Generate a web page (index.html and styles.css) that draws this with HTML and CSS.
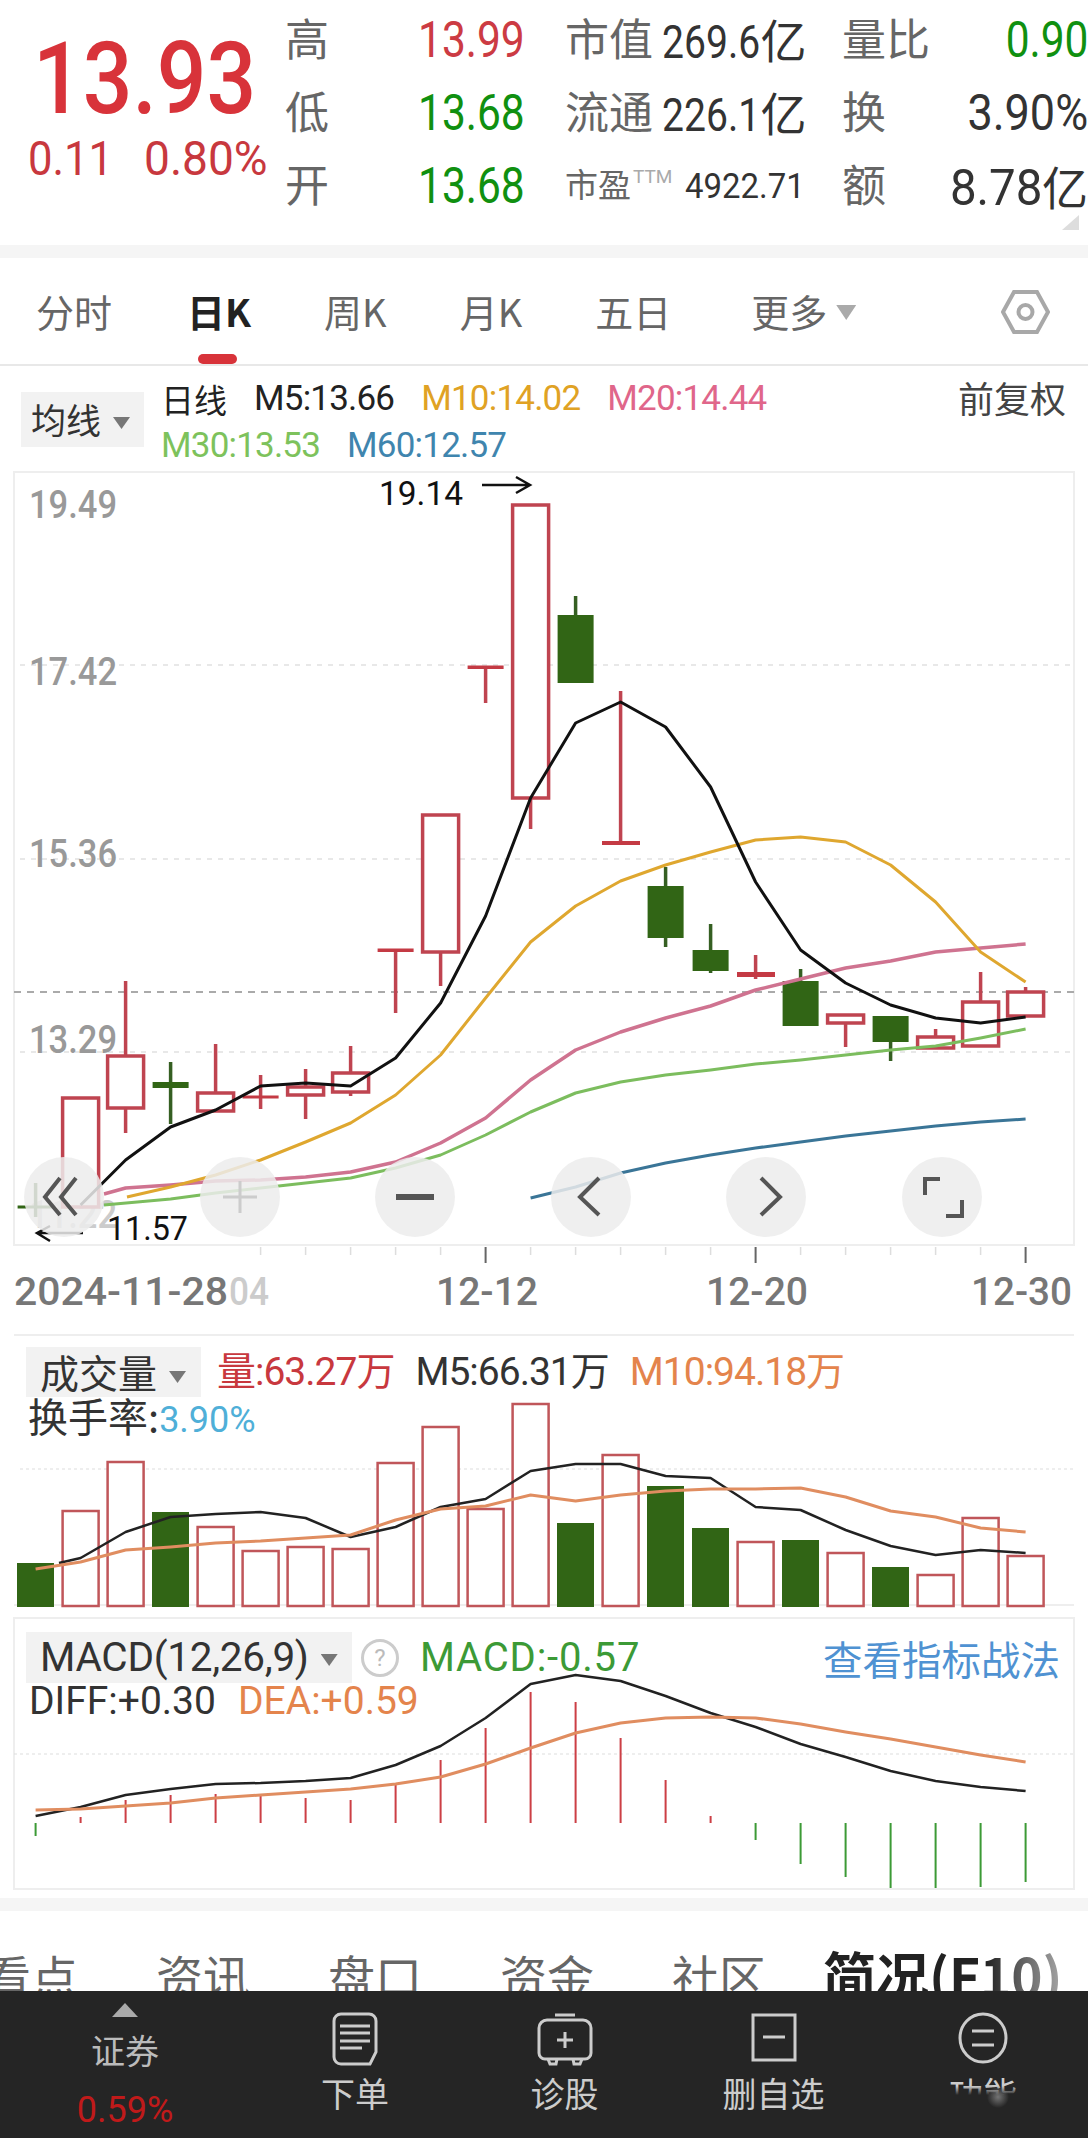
FILE: index.html
```html
<!DOCTYPE html>
<html lang="zh-CN">
<head>
<meta charset="utf-8">
<title>K线</title>
<link rel="stylesheet" href="styles.css">
</head>
<body>
<div class="screen">
  <header class="quote">
    <div class="price-block">
      <div class="price"><span class="n">13.93</span></div>
      <div class="change"><span class="n">0.11</span><span class="n wide">0.80%</span></div>
    </div>
    <div class="stats">
      <span class="lab">高</span><span class="val red"><span class="n">13.99</span></span><span class="lab">市值</span><span class="val dark mid"><span class="n">269.6</span><i>亿</i></span><span class="lab">量比</span><span class="val end green"><span class="n">0.90</span></span>
      <span class="lab">低</span><span class="val green"><span class="n">13.68</span></span><span class="lab">流通</span><span class="val dark mid"><span class="n">226.1</span><i>亿</i></span><span class="lab">换</span><span class="val end dark"><span class="n pct">3.90%</span></span>
      <span class="lab">开</span><span class="val green"><span class="n">13.68</span></span><span class="lab pe">市盈<sup>TTM</sup></span><span class="val dark small"><span class="n">4922.71</span></span><span class="lab">额</span><span class="val end dark"><span class="n amt">8.78</span><i>亿</i></span>
    </div>
    <span class="corner"></span>
  </header>
  <div class="band"></div>
  <nav class="tabs">
    <span>分时</span>
    <span class="active">日K</span>
    <span>周K</span>
    <span>月K</span>
    <span>五日</span>
    <span class="more">更多<b class="caret"></b></span>
    <svg class="hex" width="49" height="46" viewBox="0 0 49 46"><polygon points="2,23 13,3 36,3 47,23 36,43 13,43"/><circle cx="24.500" cy="23" r="7"/></svg>
  </nav>
  <section class="legend">
    <div class="select ma-select">均线<b class="caret small-caret"></b></div>
    <div class="legend-lines">
      <div class="line-1"><span class="cjk">日线</span><span>M5:13.66</span><span class="c-yellow">M10:14.02</span><span class="c-pink">M20:14.44</span></div>
      <div class="line-2"><span class="c-lgreen">M30:13.53</span><span class="c-blue">M60:12.57</span></div>
    </div>
    <span class="adjust">前复权</span>
  </section>
  <section class="kline">
    <svg class="plot" width="1088" height="860" viewBox="0 470 1088 860">
      <rect class="frame" x="14" y="472" width="1060" height="773"/>
      <g class="grid">
        <line x1="20" y1="665" x2="1074" y2="665"/>
        <line x1="20" y1="859" x2="1074" y2="859"/>
        <line x1="20" y1="1052" x2="1074" y2="1052"/>
      </g>
      <line class="last" x1="14" y1="992" x2="1074" y2="992"/>
      <g class="axis">
        <text x="29" y="518" textLength="88" lengthAdjust="spacingAndGlyphs">19.49</text>
        <text x="29" y="685" textLength="88" lengthAdjust="spacingAndGlyphs">17.42</text>
        <text x="29" y="867" textLength="88" lengthAdjust="spacingAndGlyphs">15.36</text>
        <text x="29" y="1053" textLength="88" lengthAdjust="spacingAndGlyphs">13.29</text>
        <text class="faded" x="29" y="1228" textLength="88" lengthAdjust="spacingAndGlyphs">11.22</text>
      </g>
      <g class="wick-up">
        <path d="M125.600 981V1056M125.600 1108V1133M215.600 1044V1093M260.600 1075V1109M305.600 1069V1119M350.600 1046V1073M350.600 1092V1096M395.600 950V1013M440.600 952V986M485.600 667V703M530.600 798V829M620.600 691V843M755.600 955V979M845.600 1023V1047M935.600 1029V1037M980.600 972V1002M1025.600 987V992"/>
      </g>
      <g class="wick-down">
        <path d="M35.600 1183V1217M170.600 1062V1124M575.600 596V615M665.600 867V947M710.600 924V973M800.600 969V981M890.600 1042V1061"/>
      </g>
      <g class="up">
        <rect x="62.600" y="1098" width="36" height="109"/>
        <rect x="107.600" y="1056" width="36" height="52"/>
        <rect x="197.600" y="1093" width="36" height="18"/>
        <rect x="287.600" y="1087" width="36" height="8"/>
        <rect x="332.600" y="1073" width="36" height="19"/>
        <rect x="422.600" y="815" width="36" height="137"/>
        <rect x="512.600" y="505" width="36" height="293"/>
        <rect x="827.600" y="1015" width="36" height="8"/>
        <rect x="917.600" y="1037" width="36" height="11"/>
        <rect x="962.600" y="1002" width="36" height="44"/>
        <rect x="1007.600" y="992" width="36" height="24"/>
      </g>
      <g class="bars-red">
        <rect x="242.600" y="1095.500" width="36" height="3"/>
        <rect x="377.600" y="948.500" width="36" height="3.500"/>
        <rect x="467.600" y="665.500" width="36" height="3.500"/>
        <rect x="602" y="841" width="38" height="4"/>
        <rect x="737" y="972" width="38" height="5"/>
      </g>
      <g class="down">
        <rect x="17.600" y="1205.500" width="36" height="3"/>
        <rect x="152.600" y="1082" width="36" height="6"/>
        <rect x="557.600" y="615" width="36" height="68"/>
        <rect x="647.600" y="886" width="36" height="52"/>
        <rect x="692.600" y="950" width="36" height="21"/>
        <rect x="782.600" y="981" width="36" height="45"/>
        <rect x="872.600" y="1016" width="36" height="26"/>
      </g>
      <polyline class="ma m60" points="530.600,1198 575.600,1187 620.600,1173 665.600,1163 710.600,1155 755.600,1148 800.600,1142 845.600,1136 890.600,1131 935.600,1126 980.600,1122 1025.600,1119"/>
      <polyline class="ma m30" points="104,1205 170.600,1199 215.600,1193 260.600,1188 305.600,1183 350.600,1178 395.600,1168 440.600,1155 485.600,1135 530.600,1112 575.600,1093 620.600,1082 665.600,1075 710.600,1070 755.600,1064 800.600,1060 845.600,1055 890.600,1050 935.600,1046 980.600,1038 1025.600,1029"/>
      <polyline class="ma m20" points="104,1194 125.600,1188 170.600,1185 215.600,1181 260.600,1180 305.600,1177 350.600,1172 395.600,1162 440.600,1143 485.600,1118 530.600,1080 575.600,1050 620.600,1032 665.600,1018 710.600,1006 755.600,990 800.600,979 845.600,968 890.600,961 935.600,952 980.600,948 1025.600,944"/>
      <polyline class="ma m10" points="127,1197 170.600,1187 215.600,1175 260.600,1160 305.600,1142 350.600,1123 395.600,1095 440.600,1055 485.600,998 530.600,942 575.600,906 620.600,881 665.600,865 710.600,852 755.600,840 800.600,837 845.600,842 890.600,865 935.600,902 980.600,952 1025.600,982"/>
      <polyline class="ma m5" points="80.600,1205 125.600,1160 170.600,1127 215.600,1110 260.600,1086 305.600,1083 350.600,1086 395.600,1058 440.600,1003 485.600,916 530.600,798 575.600,723 620.600,702 665.600,727 710.600,787 755.600,882 800.600,950 845.600,983 890.600,1005 935.600,1018 980.600,1023 1025.600,1017"/>
      <g class="note">
        <text x="379" y="505" textLength="84" lengthAdjust="spacingAndGlyphs">19.14</text>
        <path d="M482 485H528M516 477L530 485L516 493"/>
        <text x="107" y="1240" textLength="81" lengthAdjust="spacingAndGlyphs">11.57</text>
        <path d="M83 1233H38M50 1226L37 1233L50 1241"/>
      </g>
      <g class="ticks">
        <path d="M260.600 1247V1255M305.600 1247V1255M350.600 1247V1255M395.600 1247V1255M440.600 1247V1255M530.600 1247V1255M575.600 1247V1255M620.600 1247V1255M665.600 1247V1255M710.600 1247V1255M800.600 1247V1255M845.600 1247V1255M890.600 1247V1255M935.600 1247V1255M980.600 1247V1255"/>
      </g>
      <path class="ticks-major" d="M485.600 1247V1263M755.600 1247V1263M1025.600 1247V1263"/>
      <g class="dates">
        <text x="14" y="1305" textLength="214" lengthAdjust="spacingAndGlyphs">2024-11-28</text>
        <text class="faded" x="229" y="1305" textLength="40" lengthAdjust="spacingAndGlyphs">04</text>
        <text x="436" y="1305" textLength="102" lengthAdjust="spacingAndGlyphs">12-12</text>
        <text x="706" y="1305" textLength="102" lengthAdjust="spacingAndGlyphs">12-20</text>
        <text x="971" y="1305" textLength="101" lengthAdjust="spacingAndGlyphs">12-30</text>
      </g>
    </svg>
    <div class="zoom-row">
      <span class="zoom-btn"><svg width="80" height="80" viewBox="0 0 80 80"><path d="M36 21L21 40L36 58M52 21L37 40L52 58"/></svg></span>
      <span class="zoom-btn faint"><svg width="80" height="80" viewBox="0 0 80 80"><path d="M40 24V56M23 40H57"/></svg></span>
      <span class="zoom-btn"><svg width="80" height="80" viewBox="0 0 80 80"><path class="thick" d="M21 40H59"/></svg></span>
      <span class="zoom-btn"><svg width="80" height="80" viewBox="0 0 80 80"><path d="M48 21L29 40L48 58"/></svg></span>
      <span class="zoom-btn"><svg width="80" height="80" viewBox="0 0 80 80"><path d="M35 21L54 40L35 58"/></svg></span>
      <span class="zoom-btn"><svg width="80" height="80" viewBox="0 0 80 80"><path d="M38 22H23V38M60 43V59H44"/></svg></span>
    </div>
  </section>
  <section class="sub vol">
    <svg class="plot" width="1088" height="282" viewBox="0 1330 1088 282">
      <rect class="frame-top" x="14" y="1334" width="1060" height="2"/>
      <line class="grid-fine" x1="20" y1="1469" x2="1074" y2="1469"/>
      <line class="base" x1="14" y1="1605" x2="1074" y2="1605"/>
      <g class="vol-up">
        <rect x="62.600" y="1511" width="36" height="95"/>
        <rect x="107.600" y="1462" width="36" height="144"/>
        <rect x="197.600" y="1527" width="36" height="79"/>
        <rect x="242.600" y="1551" width="36" height="55"/>
        <rect x="287.600" y="1547" width="36" height="59"/>
        <rect x="332.600" y="1549" width="36" height="57"/>
        <rect x="377.600" y="1463" width="36" height="143"/>
        <rect x="422.600" y="1427" width="36" height="179"/>
        <rect x="467.600" y="1509" width="36" height="97"/>
        <rect x="512.600" y="1404" width="36" height="202"/>
        <rect x="602.600" y="1455" width="36" height="151"/>
        <rect x="737.600" y="1542" width="36" height="64"/>
        <rect x="827.600" y="1553" width="36" height="53"/>
        <rect x="917.600" y="1575" width="36" height="31"/>
        <rect x="962.600" y="1518" width="36" height="88"/>
        <rect x="1007.600" y="1556" width="36" height="50"/>
      </g>
      <g class="down">
        <rect x="17" y="1563" width="37" height="44"/>
        <rect x="152" y="1512" width="37" height="95"/>
        <rect x="557" y="1523" width="37" height="84"/>
        <rect x="647" y="1486" width="37" height="121"/>
        <rect x="692" y="1528" width="37" height="79"/>
        <rect x="782" y="1540" width="37" height="67"/>
        <rect x="872" y="1567" width="37" height="40"/>
      </g>
      <polyline class="ma thin-black" points="59,1563 80.600,1558 125.600,1532 170.600,1517 215.600,1514 260.600,1512 305.600,1518 350.600,1537 395.600,1527 440.600,1507 485.600,1499 530.600,1471 575.600,1464 620.600,1464 665.600,1476 710.600,1478 755.600,1507 800.600,1510 845.600,1530 890.600,1546 935.600,1555 980.600,1550 1025.600,1553"/>
      <polyline class="ma orange" points="35.600,1569 80.600,1562 125.600,1550 170.600,1547 215.600,1543 260.600,1541 305.600,1538 350.600,1535 395.600,1520 440.600,1509 485.600,1506 530.600,1495 575.600,1501 620.600,1495 665.600,1491 710.600,1489 755.600,1489 800.600,1488 845.600,1497 890.600,1511 935.600,1517 980.600,1528 1025.600,1532"/>
    </svg>
    <div class="sub-legend vol-legend">
      <div class="vol-row"><div class="select vol-select">成交量<b class="caret small-caret"></b></div><span class="c-red">量:63.27万</span><span class="c-dark">M5:66.31万</span><span class="c-orange">M10:94.18万</span></div>
      <div class="turnover">换手率:<span class="c-sky">3.90%</span></div>
    </div>
  </section>
  <section class="sub macd">
    <svg class="plot" width="1088" height="286" viewBox="0 1612 1088 286">
      <rect class="frame" x="14" y="1618" width="1060" height="271"/>
      <line class="grid-fine" x1="14" y1="1754" x2="1074" y2="1754"/>
      <path class="macd-up" d="M80.600 1823V1817M125.600 1823V1800M170.600 1823V1795M215.600 1823V1794M260.600 1823V1796M305.600 1823V1798M350.600 1823V1800M395.600 1823V1785M440.600 1823V1760M485.600 1823V1728M530.600 1823V1692M575.600 1823V1702M620.600 1823V1738M665.600 1823V1780M710.600 1823V1816"/>
      <path class="macd-down" d="M35.600 1823V1836M755.600 1823V1840M800.600 1823V1864M845.600 1823V1877M890.600 1823V1888M935.600 1823V1888M980.600 1823V1887M1025.600 1823V1882"/>
      <polyline class="ma thin-black" points="35.600,1816 80.600,1807 125.600,1795 170.600,1789 215.600,1784 260.600,1783 305.600,1781 350.600,1778 395.600,1765 440.600,1746 485.600,1718 530.600,1684 575.600,1675 620.600,1681 665.600,1696 710.600,1713 755.600,1727 800.600,1744 845.600,1757 890.600,1771 935.600,1781 980.600,1787 1025.600,1791"/>
      <polyline class="ma orange" points="35.600,1810 80.600,1809 125.600,1806 170.600,1803 215.600,1798 260.600,1795 305.600,1792 350.600,1789 395.600,1784 440.600,1777 485.600,1764 530.600,1748 575.600,1733 620.600,1723 665.600,1718 710.600,1717 755.600,1718 800.600,1724 845.600,1732 890.600,1739 935.600,1747 980.600,1755 1025.600,1762"/>
    </svg>
    <div class="sub-legend macd-legend">
      <div class="macd-row"><div class="select macd-select">MACD(12,26,9)<b class="caret small-caret"></b></div><span class="help">?</span><span class="c-mgreen">MACD:-0.57</span><a class="strategy">查看指标战法</a></div>
      <div class="diff"><span class="c-dark">DIFF:+0.30</span><span class="c-orange">DEA:+0.59</span></div>
    </div>
  </section>
  <div class="band"></div>
  <nav class="lower-tabs">
    <span>看点</span><span>资讯</span><span>盘口</span><span>资金</span><span>社区</span><span class="active">简况(F10)</span>
    <i class="fade"></i>
  </nav>
  <footer class="dock">
    <div class="dock-item first">
      <svg class="up-tri" width="26" height="14" viewBox="0 0 26 14"><polygon points="13,0 26,14 0,14"/></svg>
      <span class="lbl">证券</span>
      <span class="rate">0.59%</span>
    </div>
    <div class="dock-item">
      <svg class="ico" width="46" height="54" viewBox="0 0 46 54"><path d="M9 2H37A7 7 0 0 1 44 9V40L38 52H9A7 7 0 0 1 2 45V9A7 7 0 0 1 9 2Z"/><path d="M8 14H38M8 21H38M8 29H38M8 36H30"/></svg>
      <span class="lbl">下单</span>
    </div>
    <div class="dock-item">
      <svg class="ico" width="56" height="54" viewBox="0 0 56 54"><path d="M18 3H38"/><path d="M10 8H46A8 8 0 0 1 54 16V41A6 6 0 0 1 48 47H8A6 6 0 0 1 2 41V16A8 8 0 0 1 10 8Z"/><path d="M28 20V36M20 28H36M11 47L13 52H19L20 47M36 47L37 52H43L45 47"/></svg>
      <span class="lbl">诊股</span>
    </div>
    <div class="dock-item">
      <svg class="ico" width="46" height="54" viewBox="0 0 46 54"><rect x="2" y="3" width="42" height="45"/><path d="M12 25H34"/></svg>
      <span class="lbl">删自选</span>
    </div>
    <div class="dock-item">
      <svg class="ico" width="50" height="54" viewBox="0 0 50 54"><ellipse cx="25" cy="26" rx="23" ry="24"/><path d="M14 19H36M14 33H36"/></svg>
      <span class="lbl">功能</span>
    </div>
    <i class="smudge"></i>
  </footer>
</div>
</body>
</html>
```
FILE: styles.css
```css
* { box-sizing: border-box; }
html, body { margin: 0; padding: 0; background: #fff; }
body { width: 1088px; height: 2138px; overflow: hidden; }
.screen {
  width: 1088px; height: 2138px; overflow: hidden;
  font-family: Roboto, "Noto Sans CJK SC", sans-serif;
  color: #333;
}
.n { display: inline-block; transform: scaleX(.85); transform-origin: left center; }
.quote { position: relative; display: flex; height: 245px; }
.price-block { width: 285px; }
.price {
  font-size: 100px; line-height: 100px; color: #d8333a; font-weight: 500;
  padding: 29px 0 0 33px; height: 129px;
}
.price .n { transform: scaleX(.875); }
.change {
  display: flex; gap: 20px; padding-left: 28px; margin-top: 5px;
  font-size: 49px; line-height: 50px; color: #c8383e;
}
.change .n { transform: scaleX(.89); }
.change .wide { transform: scaleX(.94); }
.stats {
  width: 803px; padding-top: 4px;
  display: grid; grid-template-columns: 133px 147px 97px 180px 96px 150px; grid-auto-rows: 73px; align-items: center;
}
.lab { font-family: "Noto Sans CJK SC", sans-serif; font-size: 44px; line-height: 67px; margin-bottom: 6px; color: #666; white-space: nowrap; }
.lab.pe { font-size: 33px; }
.lab sup { font-family: Roboto, sans-serif; font-size: 19px; color: #aaa; vertical-align: 14px; line-height: 0; margin-left: 2px; }
.val { font-size: 50px; line-height: 73px; white-space: nowrap; }
.val i { font-family: "Noto Sans CJK SC", sans-serif; font-style: normal; font-size: 46px; font-weight: 400; }
.val.mid { font-size: 46px; }
.val.mid .n { margin-right: -17px; }
.val.end { text-align: right; }
.val.end .n { transform-origin: right center; }
.val.end .pct { transform: scaleX(.9); }
.val.end .amt { transform: scaleX(.95); }
.val.small { font-size: 35px; padding-left: 23px; }
.val.small .n { transform: scaleX(.94); }
.red { color: #cc3b43; }
.green { color: #109010; }
.dark { color: #333; }
.corner {
  position: absolute; left: 1062px; top: 215px; width: 17px; height: 15px;
  background: #ddd; clip-path: polygon(100% 0, 100% 100%, 0 100%);
}
.band { height: 13px; background: #f5f5f5; }
.tabs {
  position: relative; display: flex; align-items: center; gap: 73px;
  height: 108px; padding: 0 0 0 36px; border-bottom: 2px solid #e8e8e8;
  font-family: "Noto Sans CJK SC", sans-serif; font-size: 38px; color: #666;
}
.tabs span { line-height: 50px; }
.tabs .active { color: #222; font-weight: 700; margin-left: 2px; position: relative; }
.tabs .active::after {
  content: ""; position: absolute; left: 11px; top: 68px; width: 39px; height: 10px;
  background: #d8333a; border-radius: 5px;
}
.tabs .more { margin-left: 7px; position: relative; }
.caret { display: inline-block; width: 20px; height: 15px; background: #aaa; clip-path: polygon(0 0, 100% 0, 50% 100%); margin-left: 9px; vertical-align: 7px; }
.small-caret { width: 17px; height: 12px; background: #777; margin-left: 12px; vertical-align: 5px; }
.hex { position: absolute; left: 1001px; top: 31px; }
.hex polygon, .hex circle { fill: none; stroke: #a8a8a8; stroke-width: 4; }
.legend { position: relative; height: 104px; padding: 9px 0 0 161px; font-size: 35px; }
.select { background: #f2f2f2; color: #333; font-family: "Noto Sans CJK SC", sans-serif; white-space: nowrap; }
.ma-select { position: absolute; left: 21px; top: 26px; width: 123px; height: 55px; padding-left: 10px; font-size: 35px; line-height: 53px; }
.line-1, .line-2 { display: flex; height: 47px; align-items: center; white-space: nowrap; color: #222; letter-spacing: -.8px; gap: 27px; }
.cjk { font-family: "Noto Sans CJK SC", sans-serif; font-size: 33px; letter-spacing: 0; }
.c-yellow { color: #e0a224; }
.c-pink { color: #e0668a; }
.c-lgreen { color: #7dc25c; }
.c-blue { color: #3f85ae; }
.c-red { color: #c8383e; }
.c-dark { color: #333; }
.c-orange { color: #e4844c; }
.c-sky { color: #4fafd8; }
.c-mgreen { color: #3c9a36; }
.adjust { position: absolute; left: 958px; top: 6px; font-family: "Noto Sans CJK SC", sans-serif; font-size: 36px; line-height: 50px; color: #444; }
.kline { position: relative; height: 860px; }
.plot { display: block; }
.frame { fill: none; stroke: #eee; stroke-width: 2; }
.frame-top { fill: #eee; }
.grid line { stroke: #e8e8e8; stroke-width: 2; stroke-dasharray: 5 6; }
.last { stroke: #aaa; stroke-width: 2; stroke-dasharray: 7 6; }
.grid-fine { stroke: #ddd; stroke-width: 1; stroke-dasharray: 3 3; }
.base { stroke: #eee; stroke-width: 2; }
.axis text { font-family: Roboto, sans-serif; font-size: 39px; font-weight: 500; fill: #999; }
.axis .faded { fill: #ccc; }
.up rect { fill: #fff; stroke: #bf4450; stroke-width: 3.500; }
.wick-up path { stroke: #bf4450; stroke-width: 3.500; fill: none; }
.bars-red rect { fill: #c43a44; }
.wick-down path { stroke: #355f22; stroke-width: 3.500; fill: none; }
.down rect { fill: #316515; }
.vol-up rect { fill: #fff; stroke: #c0565a; stroke-width: 2.500; }
.ma { fill: none; stroke-linejoin: round; stroke-linecap: butt; }
.m5 { stroke: #111; stroke-width: 3; }
.m10 { stroke: #dfa72f; stroke-width: 3; }
.m20 { stroke: #cf7390; stroke-width: 3.500; }
.m30 { stroke: #7cbd5e; stroke-width: 3; }
.m60 { stroke: #3a7597; stroke-width: 3; }
.thin-black { stroke: #222; stroke-width: 2.500; }
.orange { stroke: #e08d60; stroke-width: 3; }
.macd-up { fill: none; stroke: #cc3f45; stroke-width: 2; }
.macd-down { fill: none; stroke: #3c9a36; stroke-width: 2; }
.note text { font-family: Roboto, sans-serif; font-size: 33px; fill: #111; }
.note path { fill: none; stroke: #111; stroke-width: 2.500; }
.ticks path { stroke: #ddd; stroke-width: 1.500; }
.ticks-major { stroke: #666; stroke-width: 2; }
.dates text { font-family: Roboto, sans-serif; font-size: 38px; font-weight: 500; fill: #777; }
.dates .faded { fill: #ccc; }
.zoom-row { position: absolute; left: 24px; top: 687px; width: 958px; display: flex; justify-content: space-between; }
.zoom-btn { display: block; width: 80px; height: 80px; border-radius: 50%; background: rgba(236, 236, 236, .85); }
.zoom-btn svg { display: block; }
.zoom-btn path { fill: none; stroke: #555; stroke-width: 4; }
.zoom-btn path.thick { stroke-width: 6; }
.zoom-btn.faint path { stroke: #ccc; stroke-width: 3; }
.sub { position: relative; }
.vol { height: 282px; }
.macd { height: 286px; }
.sub-legend { position: absolute; left: 0; top: 0; width: 1088px; font-size: 39px; }
.vol-row { position: absolute; left: 26px; top: 17px; display: flex; align-items: center; white-space: nowrap; letter-spacing: -1px; line-height: 50px; }
.vol-row > span { margin-left: 21px; }
.vol-row > span.c-red { margin-left: 16px; }
.vol-select { width: 175px; height: 50px; padding-left: 14px; font-size: 39px; line-height: 48px; letter-spacing: 0; }
.turnover { position: absolute; left: 28px; top: 61px; font-family: "Noto Sans CJK SC", sans-serif; font-size: 40px; line-height: 48px; white-space: nowrap; color: #333; }
.turnover span { font-family: Roboto, sans-serif; font-size: 36px; }
.macd-row { position: absolute; left: 26px; top: 20px; width: 1034px; display: flex; align-items: center; white-space: nowrap; line-height: 51px; }
.macd-select { width: 326px; height: 51px; padding-left: 14px; font-family: Roboto, sans-serif; font-size: 40.500px; line-height: 50px; letter-spacing: -.3px; }
.help { margin-left: 9px; width: 38px; height: 38px; border: 3px solid #ccc; border-radius: 50%; color: #bbb; font-size: 24px; line-height: 32px; text-align: center; }
.c-mgreen { margin-left: 21px; font-size: 40px; letter-spacing: .8px; }
.strategy { margin-left: auto; font-family: "Noto Sans CJK SC", sans-serif; font-size: 39.500px; color: #4f92d2; }
.diff { position: absolute; left: 29px; top: 68px; display: flex; gap: 22px; white-space: nowrap; font-size: 39px; line-height: 42px; }
.lower-tabs {
  position: relative; display: flex; gap: 78px; height: 80px; overflow: hidden;
  padding: 40px 0 0 0;
  font-family: "Noto Sans CJK SC", sans-serif; font-size: 47px; line-height: 47px; color: #666; white-space: nowrap;
}
.lower-tabs span:first-child { margin-left: -16px; }
.lower-tabs .active { color: #222; font-weight: 700; margin-left: -21px; font-size: 53px; }
.fade { position: absolute; left: 985px; top: 0; width: 103px; height: 80px; background: linear-gradient(90deg, rgba(255,255,255,0), rgba(255,255,255,.8)); }
.dock {
  position: relative; height: 147px; background: #252525;
  display: grid; grid-template-columns: 250px 210px 209px 209px 210px;
  font-family: "Noto Sans CJK SC", sans-serif; color: #ccc;
}
.dock-item { display: flex; flex-direction: column; align-items: center; padding-top: 21px; }
.dock-item.first { padding-top: 12px; }
.lbl { font-size: 34px; line-height: 34px; margin-top: 10px; white-space: nowrap; }
.first .lbl { margin-top: 16px; color: #bbb; }
.rate { font-family: Roboto, sans-serif; font-size: 36px; line-height: 34px; margin-top: 26px; color: #c01a1a; }
.up-tri polygon { fill: #aaa; }
.ico path, .ico rect, .ico ellipse { fill: none; stroke: #ccc; stroke-width: 3; }
.smudge {
  position: absolute; left: 840px; top: 95px; width: 248px; height: 52px;
  background:
    radial-gradient(ellipse 11px 11px at 158px 11px, rgba(150,150,150,.7), rgba(150,150,150,0)),
    linear-gradient(180deg, rgba(37,37,37,0), #252525 9px);
}
```
